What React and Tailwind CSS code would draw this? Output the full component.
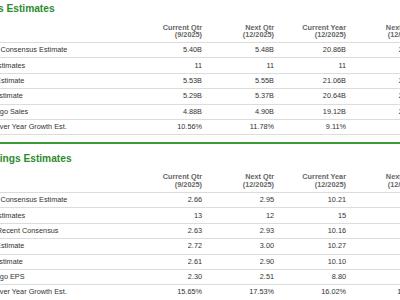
import React from "react";

const cols = ["Current Qtr|(9/2025)", "Next Qtr|(12/2025)", "Current Year|(12/2025)", "Next Year|(12/2026)"];

const sales = [
  ["Zacks Consensus Estimate", "5.40B", "5.48B", "20.86B", "22.87B"],
  ["# of Estimates", "11", "11", "11", "11"],
  ["High Estimate", "5.53B", "5.55B", "21.06B", "23.45B"],
  ["Low Estimate", "5.29B", "5.37B", "20.64B", "22.31B"],
  ["Year ago Sales", "4.88B", "4.90B", "19.12B", "20.86B"],
  ["Year over Year Growth Est.", "10.56%", "11.78%", "9.11%", "8.66%"],
];

const eps = [
  ["Zacks Consensus Estimate", "2.66", "2.95", "10.21", "11.40"],
  ["# of Estimates", "13", "12", "15", "14"],
  ["Most Recent Consensus", "2.63", "2.93", "10.16", "11.42"],
  ["High Estimate", "2.72", "3.00", "10.27", "11.82"],
  ["Low Estimate", "2.61", "2.90", "10.10", "11.05"],
  ["Year ago EPS", "2.30", "2.51", "8.80", "10.21"],
  ["Year over Year Growth Est.", "15.65%", "17.53%", "16.02%", "12.63%"],
];

function Table({ rows }) {
  return (
    <div>
      <div className="grid grid-cols-[154px_72px_72px_72px_76px] h-[26px] border-b border-[#dcdcdc] items-end pb-[3.5px] leading-[7.5px] font-bold text-[#666666] text-[7.3px]">
        <div />
        {cols.map((c, i) => {
          const [a, b] = c.split("|");
          return (
            <div key={c} className={i === 3 ? "text-right whitespace-nowrap pr-[3px]" : "text-right whitespace-nowrap"}>
              <div>{a}</div>
              <div>{b}</div>
            </div>
          );
        })}
      </div>
      {rows.map((r) => (
        <div
          key={r[0]}
          className="grid grid-cols-[154px_72px_72px_72px_76px] h-[15.4px] border-b border-[#dcdcdc] items-center text-[7.3px] text-[#333333] leading-[8px]"
        >
          <div className="pl-[3px] whitespace-nowrap">{r[0]}</div>
          {r.slice(1).map((v, i) => (
            <div key={i} className="text-right whitespace-nowrap">{v}</div>
          ))}
        </div>
      ))}
    </div>
  );
}

export default function App() {
  return (
    <div className="w-[400px] h-[300px] overflow-hidden bg-white" style={{ fontFamily: '"Liberation Sans", Arial, sans-serif' }}>
      <div className="-ml-6 w-[460px]">
        <section>
          <h2 className="h-[17px] leading-[17px] pl-[1px] text-[10.2px] font-bold text-[#2e8b2e] whitespace-nowrap">Sales Estimates</h2>
          <Table rows={sales} />
        </section>
        <section className="mt-[6.6px] border-t-2 border-[#3a9a3a] pt-[6px]">
          <h2 className="h-[17px] leading-[17px] pl-[1px] text-[10.2px] font-bold text-[#2e8b2e] whitespace-nowrap">Earnings Estimates</h2>
          <Table rows={eps} />
        </section>
      </div>
    </div>
  );
}
